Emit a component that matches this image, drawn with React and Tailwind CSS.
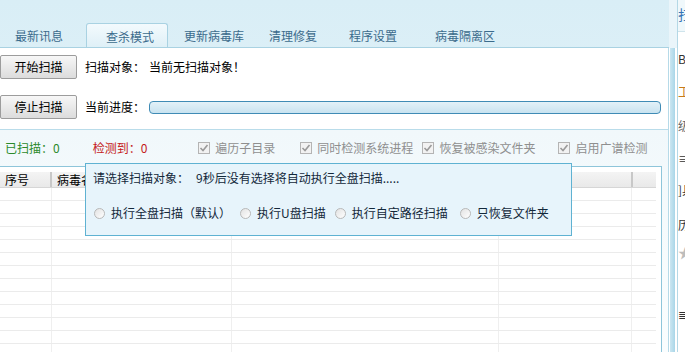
import React from 'react';

const font = 'font-["Noto_Sans_CJK_SC","Noto_Sans",sans-serif]';

const tabs = [
  { label: '最新讯息', w: 'w-[86px]', pl: 'pl-[15px]' },
  { label: '查杀模式', w: 'w-[82px]', pl: 'pl-[19px]', active: true },
  { label: '更新病毒库', w: 'w-[85px]', pl: 'pl-[16px]' },
  { label: '清理修复', w: 'w-[80px]', pl: 'pl-[16px]' },
  { label: '程序设置', w: 'w-[86px]', pl: 'pl-[16px]' },
  { label: '病毒隔离区', w: 'w-[90px]', pl: 'pl-[16px]' },
];

const CheckBox = ({ label, ml }) => (
  <div className={`flex items-center ${ml}`}>
    <span className="w-[12px] h-[12px] border border-[#b4b4b4] bg-[#f2f2f2] flex items-center justify-center">
      <svg width="10" height="10" viewBox="0 0 10 10">
        <path d="M1.5 5 L4 7.5 L8.5 2" fill="none" stroke="#9a9a9a" strokeWidth="1.6" />
      </svg>
    </span>
    <span className="ml-[5px] text-[#8f8f8f]">{label}</span>
  </div>
);

const Radio = ({ label, ml }) => (
  <div className={`flex items-center ${ml}`}>
    <span className="w-[11px] h-[11px] rounded-full border border-[#b8b8b8] bg-gradient-to-br from-[#e2e2e2] to-white" />
    <span className="ml-[6px]">{label}</span>
  </div>
);

const Btn = ({ children }) => (
  <button className="w-[77px] h-[24px] border border-[#9c9c9c] rounded-[2px] bg-gradient-to-b from-[#f7f7f7] to-[#dcdcdc] text-black text-[12px] leading-none">
    {children}
  </button>
);

const cols = ['w-[52px]', 'w-[180px]', 'w-[267px]', 'w-[133px]', 'flex-1'];

export default function App() {
  const rows = Array.from({ length: 13 });
  return (
    <div className={`w-[685px] h-[352px] flex overflow-hidden text-[12px] text-black ${font}`}>
      {/* main area */}
      <div className="w-[669px] flex flex-col bg-gradient-to-b from-[#d9eef6] to-[#eaf5fa]">
        {/* tabs */}
        <div className="h-[48px] shrink-0 flex items-end border-b border-[#a9d2e2]">
          {tabs.map((t) => (
            <div
              key={t.label}
              className={`${t.w} ${t.pl} h-[24px] leading-[26px] text-[#3b6b8c] ${
                t.active
                  ? 'border border-b-0 border-[#a9d2e2] rounded-t-[3px] bg-gradient-to-b from-[#f3fafd] to-[#dff0f7]'
                  : ''
              }`}
            >
              {t.label}
            </div>
          ))}
        </div>

        {/* panel */}
        <div className="flex-1 min-h-0 bg-white relative flex flex-col border-r border-[#b6dae8]">
          <div className="flex items-center mt-[7px] shrink-0">
            <Btn>开始扫描</Btn>
            <span className="ml-[8px]">扫描对象：</span>
            <span className="ml-[4px]">当前无扫描对象！</span>
          </div>
          <div className="flex items-center mt-[16px] shrink-0">
            <Btn>停止扫描</Btn>
            <span className="ml-[8px]">当前进度：</span>
            <div className="ml-[4px] w-[512px] h-[13px] rounded-[4px] border border-[#3f8bb5] bg-gradient-to-b from-[#e3f1f8] to-[#c8e3f0]" />
          </div>

          <div className="mt-[10px] border-t border-[#b9dcea] flex-1 min-h-0 flex flex-col bg-gradient-to-b from-[#f1f8fb] to-[#fafdfe]">
            <div className="h-[36px] shrink-0 flex items-center pl-[5px]">
              <span className="text-[#2b8a2b]">已扫描：0</span>
              <span className="ml-[33px] text-[#c41a1a]">检测到：0</span>
              <CheckBox ml="ml-[51px]" label="遍历子目录" />
              <CheckBox ml="ml-[25px]" label="同时检测系统进程" />
              <CheckBox ml="ml-[9px]" label="恢复被感染文件夹" />
              <CheckBox ml="ml-[23px]" label="启用广谱检测" />
            </div>

            {/* table */}
            <div className="w-[662px] flex-1 min-h-0 bg-white border-t border-r border-[#8ec5da] pt-[5px] pr-[5px] overflow-hidden">
              <div className="h-[16px] flex bg-gradient-to-b from-[#f4f4f4] to-[#e9e9e9] border-b border-[#d6d6d6]">
                <div className="w-[52px] pl-[5px] leading-[16px] border-r-2 border-[#c8c8c8]">序号</div>
                <div className="w-[448px] pl-[5px] leading-[16px]">病毒名称</div>
                <div className="w-[131px]" />
                <div className="flex-1 border-l-2 border-[#c8c8c8]" />
              </div>
              {rows.map((_, i) => (
                <div key={i} className="h-[13px] flex border-b border-[#ebebeb]">
                  {cols.map((c, j) => (
                    <div key={j} className={`${c} ${j < 4 ? 'border-r border-[#efefef]' : ''}`} />
                  ))}
                </div>
              ))}
            </div>
          </div>

          {/* popup */}
          <div className="absolute left-[85px] top-[115px] w-[487px] h-[73px] border border-[#5fb2d2] bg-[#e7f4fb] text-[#13283a]">
            <div className="flex items-center h-[28px] pl-[7px]">
              <span>请选择扫描对象：</span>
              <span className="ml-[7px]">9秒后没有选择将自动执行全盘扫描.....</span>
            </div>
            <div className="flex items-center mt-[12px] pl-[8px]">
              <Radio label="执行全盘扫描（默认）" ml="" />
              <Radio label="执行U盘扫描" ml="ml-[9px]" />
              <Radio label="执行自定路径扫描" ml="ml-[9px]" />
              <Radio label="只恢复文件夹" ml="ml-[12px]" />
            </div>
          </div>
        </div>
      </div>

      {/* blue strip */}
      <div className="w-[8px] flex flex-col">
        <div className="h-[48px] shrink-0 bg-[#eaf5fa]" />
        <div className="flex-1 flex bg-white">
          <div className="w-[1px]" />
          <div className="w-[5px] bg-gradient-to-r from-[#cbe6f1] to-[#a9d6e8]" />
        </div>
      </div>

      {/* right sidebar (cut off) */}
      <div className="w-[8px] border-l border-[#b4d8e6] bg-white overflow-hidden flex flex-col text-[#333] whitespace-nowrap">
        <div className="h-[32px] shrink-0 border-b border-[#cfe4ec] bg-[#f0f8fb] text-[#3674b5] text-[14px] leading-[28px]">扫描</div>
        <div className="mt-[20px] leading-[14px]">BHO</div>
        <div className="mt-[19px] leading-[14px] text-[#c87a1a]">工具</div>
        <div className="mt-[20px] leading-[14px] text-[#666]">级别</div>
        <div className="mt-[19px] leading-[14px]">≡F</div>
        <div className="mt-[17px] leading-[14px]">]具</div>
        <div className="mt-[21px] leading-[14px]">历</div>
        <div className="mt-[13px] leading-[14px] text-[#bdbdbd] text-[14px]">★</div>
        <div className="mt-[48px] leading-[14px]">≣</div>
      </div>
    </div>
  );
}
